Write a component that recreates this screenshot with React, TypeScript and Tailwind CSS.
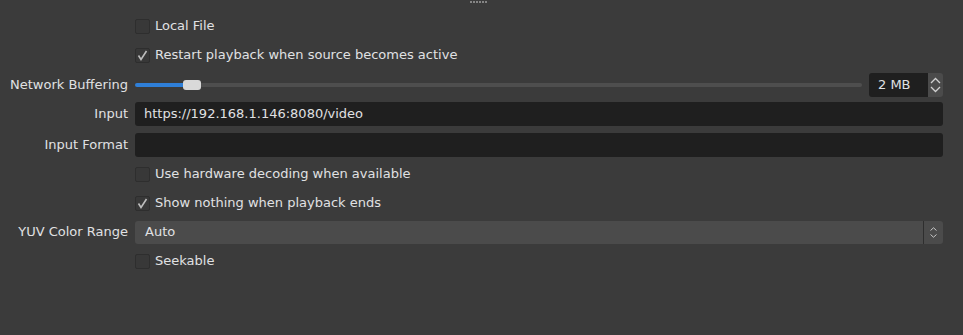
import React from "react";

function Check({ checked }: { checked?: boolean }) {
  return (
    <div className="w-[15px] h-[15px] rounded-[2px] border border-[#2e2e2e] bg-[#383838] flex items-center justify-center shrink-0">
      {checked && (
        <svg width="11" height="11" viewBox="0 0 11 11">
          <path d="M1.5 5.5 L4 9.5 L9.5 1" fill="none" stroke="#bdbdbd" strokeWidth="1.6" />
        </svg>
      )}
    </div>
  );
}

function Row({
  label,
  children,
  className = "",
}: {
  label?: string;
  children: React.ReactNode;
  className?: string;
}) {
  return (
    <div className={"flex items-center h-[24px] " + className}>
      <div className="w-[128px] text-right shrink-0 whitespace-nowrap">{label}</div>
      <div className="ml-[7px] flex-1 flex items-center h-full min-w-0">{children}</div>
    </div>
  );
}

function CheckRow({ label, checked, className = "" }: { label: string; checked?: boolean; className?: string }) {
  return (
    <Row className={className}>
      <Check checked={checked} />
      <span className="ml-[5px] whitespace-nowrap">{label}</span>
    </Row>
  );
}

export default function App() {
  return (
    <div
      className="w-[963px] h-[335px] bg-[#3b3b3b] text-[#e0e1e3] text-[13px] pr-[20px] overflow-hidden"
      style={{ fontFamily: '"DejaVu Sans", sans-serif' }}
    >
      <div className="h-[14px] flex items-start pl-[470px] pt-[1px] gap-[1px]">
        {[0, 1, 2, 3, 4, 5].map((i) => (
          <div key={i} className="w-[2px] h-[2px] bg-[#858585]" />
        ))}
      </div>
      <CheckRow label="Local File" />
      <CheckRow label="Restart playback when source becomes active" checked className="mt-[5px]" />
      <Row label="Network Buffering" className="mt-[6px]">
        <div className="flex-1 flex items-center h-full">
          <div className="w-[48px] h-[4px] rounded-l-[2px] bg-[#2f7fd8]" />
          <div className="w-[18px] h-[10px] rounded-[3px] bg-[#d9d9d9]" />
          <div className="flex-1 h-[4px] rounded-r-[2px] bg-[#4e4e4e]" />
        </div>
        <div className="ml-[7px] flex h-full">
          <div className="w-[59px] h-full bg-[#1f1f1f] rounded-l-[3px] flex items-center pl-[9px]">2 MB</div>
          <div className="w-[15px] h-full bg-[#4b4b4b] rounded-r-[3px] flex flex-col items-center justify-center gap-[2px]">
            <svg width="11" height="7" viewBox="0 0 11 7">
              <path d="M1 6 L5.5 1.5 L10 6" fill="none" stroke="#d0d0d0" strokeWidth="1.3" />
            </svg>
            <svg width="11" height="7" viewBox="0 0 11 7">
              <path d="M1 1 L5.5 5.5 L10 1" fill="none" stroke="#d0d0d0" strokeWidth="1.3" />
            </svg>
          </div>
        </div>
      </Row>
      <Row label="Input" className="mt-[5px]">
        <div className="flex-1 h-full bg-[#1f1f1f] rounded-[3px] flex items-center pl-[9px]">
          https://192.168.1.146:8080/video
        </div>
      </Row>
      <Row label="Input Format" className="mt-[7px]">
        <div className="flex-1 h-full bg-[#1f1f1f] rounded-[3px]" />
      </Row>
      <CheckRow label="Use hardware decoding when available" className="mt-[5px]" />
      <CheckRow label="Show nothing when playback ends" checked className="mt-[5px]" />
      <Row label="YUV Color Range" className="mt-[5px]">
        <div className="flex-1 h-[23px] bg-[#4b4b4b] rounded-[3px] flex items-center">
          <div className="flex-1 pl-[10px]">Auto</div>
          <div className="w-[1px] h-full bg-[#2e2e2e]" />
          <div className="w-[19px] h-full flex flex-col items-center justify-center gap-[3px]">
            <svg width="7" height="4" viewBox="0 0 7 4">
              <path d="M0.5 3.5 L3.5 0.8 L6.5 3.5" fill="none" stroke="#c8c8c8" strokeWidth="1" />
            </svg>
            <svg width="7" height="4" viewBox="0 0 7 4">
              <path d="M0.5 0.5 L3.5 3.2 L6.5 0.5" fill="none" stroke="#c8c8c8" strokeWidth="1" />
            </svg>
          </div>
        </div>
      </Row>
      <CheckRow label="Seekable" className="mt-[5px]" />
    </div>
  );
}
